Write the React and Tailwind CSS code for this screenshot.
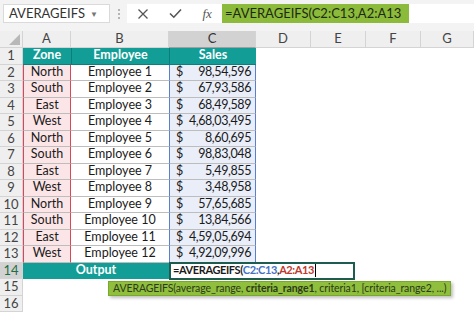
import React from 'react';

const rows = [
  ['North', 'Employee 1', '98,54,596'],
  ['South', 'Employee 2', '67,93,586'],
  ['East', 'Employee 3', '68,49,589'],
  ['West', 'Employee 4', '4,68,03,495'],
  ['North', 'Employee 5', '8,60,695'],
  ['South', 'Employee 6', '98,83,048'],
  ['East', 'Employee 7', '5,49,855'],
  ['West', 'Employee 8', '3,48,958'],
  ['North', 'Employee 9', '57,65,685'],
  ['South', 'Employee 10', '13,84,566'],
  ['East', 'Employee 11', '4,59,05,694'],
  ['West', 'Employee 12', '4,92,09,996'],
];

const cols = ['A', 'B', 'C', 'D', 'E', 'F', 'G'];

function RowHead({ n, active }) {
  return (
    <div
      className={
        'h-[16.5px] flex items-center justify-center border-b border-r border-[#d4d4d4] text-[13px] ' +
        (active ? 'bg-[#d2d2d2] text-[#1f6e43]' : 'bg-[#efefef] text-[#444]')
      }
    >
      {n}
    </div>
  );
}

function Empty() {
  return <div className="h-[16.5px] bg-white" />;
}

export default function App() {
  return (
    <div className="w-[474px] h-[312px] overflow-hidden bg-white text-[#1a1a1a] font-['Lato',sans-serif]">
      {/* formula toolbar */}
      <div className="h-[31px] bg-[#f3f3f3] flex items-start pt-[4px] pl-[3px]">
        <div className="w-[107px] h-[19px] bg-white border border-[#dadada] flex items-center justify-between px-[5px] text-[13px] text-[#333]">
          <span>AVERAGEIFS</span>
          <span className="text-[8px] text-[#777] pr-[6px]">▼</span>
        </div>
        <div className="w-[17px] h-[19px] flex flex-col items-center justify-center gap-[2px]">
          <span className="w-[2px] h-[2px] bg-[#b5b5b5]" />
          <span className="w-[2px] h-[2px] bg-[#b5b5b5]" />
          <span className="w-[2px] h-[2px] bg-[#b5b5b5]" />
        </div>
        <div className="w-[95px] h-[19px] bg-white flex items-center justify-around text-[#555]">
          <svg width="12" height="12" viewBox="0 0 12 12">
            <path d="M1.5 1.5 L10.5 10.5 M10.5 1.5 L1.5 10.5" stroke="#555" strokeWidth="1.3" fill="none" />
          </svg>
          <svg width="13" height="11" viewBox="0 0 13 11">
            <path d="M1 5.5 L4.8 9.2 L12 1.5" stroke="#555" strokeWidth="1.6" fill="none" />
          </svg>
          <span className="italic text-[13px] font-['Liberation_Serif',serif] text-[#555]">fx</span>
        </div>
        <div className="w-[187px] h-[19px] bg-[#8cba3b] flex items-center pl-[3px] text-[13px] text-[#1d2a10]">
          =AVERAGEIFS(C2:C13,A2:A13
        </div>
        <div className="flex-1 h-[19px] bg-white" />
      </div>

      {/* sheet grid */}
      <div className="grid grid-cols-[23px_48px_98px_87px_55px_55px_55px_53px] text-[12.5px]">
        {/* column headers */}
        <div className="h-[17px] bg-[#efefef] border-b border-r border-[#d4d4d4] relative overflow-hidden">
          <div className="absolute right-[2px] bottom-[2px] w-0 h-0 border-l-[11px] border-l-transparent border-b-[11px] border-b-[#b8b8b8]" />
        </div>
        {cols.map((c) => (
          <div
            key={c}
            className={
              'h-[17px] flex items-center justify-center border-b border-r border-[#d4d4d4] text-[13px] ' +
              (c === 'C' ? 'bg-[#d2d2d2] text-[#333] border-b-[#a0a0a0]' : 'bg-[#efefef] text-[#444]')
            }
          >
            {c}
          </div>
        ))}

        {/* row 1 */}
        <RowHead n={1} />
        <div className="h-[16.5px] bg-[#129d96] text-white font-bold flex items-center justify-center border-b border-[#0c7f79]">Zone</div>
        <div className="h-[16.5px] bg-[#129d96] text-white font-bold flex items-center justify-center border-l border-b border-[#0c7f79]">Employee</div>
        <div className="h-[16.5px] bg-[#129d96] text-white font-bold flex items-center justify-center border-l border-b border-[#0c7f79]">Sales</div>
        <Empty /><Empty /><Empty /><Empty />

        {rows.map((r, i) => (
          <React.Fragment key={i}>
            <RowHead n={i + 2} />
            <div className="h-[16.5px] bg-[#fce5e7] border-x border-x-[#d9465c] border-b border-b-[#bdbdbd] flex items-center justify-center">
              {r[0]}
            </div>
            <div className="h-[16.5px] bg-white border-b border-[#bdbdbd] flex items-center justify-center">
              {r[1]}
            </div>
            <div className="h-[16.5px] bg-[#e9eef9] border-x border-x-[#5b7fd0] border-b border-b-[#bdbdbd] flex items-center justify-between pl-[6px] pr-[4px]">
              <span>$</span>
              <span className="tracking-[-0.4px]">{r[2]}</span>
            </div>
            <Empty /><Empty /><Empty /><Empty />
          </React.Fragment>
        ))}

        {/* row 14 */}
        <RowHead n={14} active />
        <div className="col-span-2 h-[16.5px] bg-[#129d96] text-white font-bold flex items-center justify-center">
          Output
        </div>
        <div className="h-[16.5px] relative">
          <div className="absolute left-0 top-[-1px] w-[186px] h-[18px] border-2 border-[#1d5c4f] bg-white flex items-center pl-[2px] text-[11px] tracking-[-0.4px] font-bold z-10">
            <span>=AVERAGEIFS(</span>
            <span className="text-[#4472c4]">C2:C13</span>
            <span>,</span>
            <span className="text-[#c0392b]">A2:A13</span>
            <span className="w-px h-[13px] bg-black ml-px" />
          </div>
        </div>
        <Empty /><Empty /><Empty /><Empty />

        {/* row 15 */}
        <RowHead n={15} />
        <div className="col-span-7 h-[16.5px] relative">
          <div className="absolute left-[85px] top-[2px] h-[15px] px-[4px] bg-[#8fbf3c] border border-[#7aa82e] shadow-[2px_2px_3px_rgba(0,0,0,0.25)] flex items-center text-[10.5px] tracking-[-0.1px] text-[#2d3a1a] whitespace-nowrap z-10">
            AVERAGEIFS(average_range,&nbsp;<b>criteria_range1</b>, criteria1, [criteria_range2, ...)
          </div>
        </div>

        {/* row 16 */}
        <RowHead n={16} />
        <div className="col-span-7 h-[16.5px]" />
      </div>
    </div>
  );
}
